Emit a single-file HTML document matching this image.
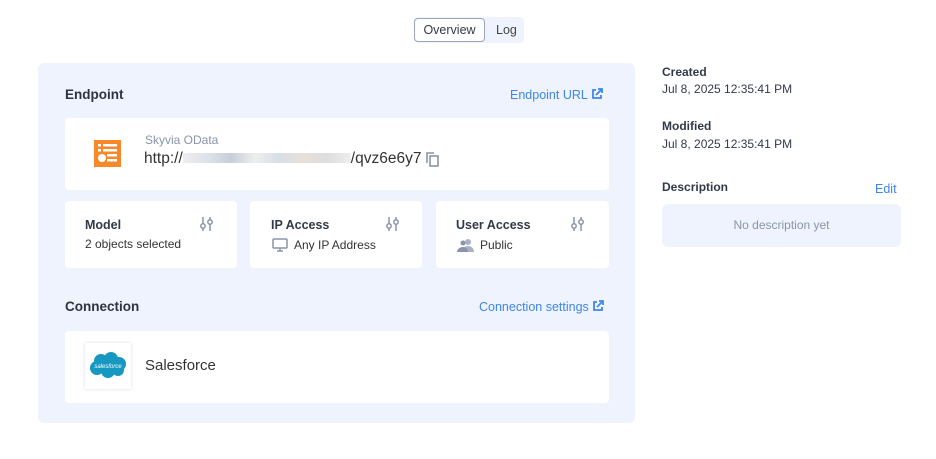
<!DOCTYPE html>
<html><head><style>
*{box-sizing:border-box;margin:0;padding:0}
body{width:936px;height:459px;background:#fff;font-family:"Liberation Sans",sans-serif;color:#333a47;position:relative;overflow:hidden}
.a{position:absolute}
.tabs{left:414px;top:17px;width:110px;height:26px;background:#eef3fd;border-radius:4px}
.tab1{left:414px;top:18px;width:71px;height:24px;border:1px solid #9aa6c4;border-radius:4px;background:#fff;font-size:12.5px;text-align:center;line-height:22px}
.tab2{left:496px;top:18px;font-size:12.5px;line-height:24px;color:#444}
.panel{left:38px;top:63px;width:597px;height:360px;background:#eef3fd;border-radius:6px}
.card{background:#fff;border-radius:4px}
.h{font-size:13.5px;font-weight:bold;color:#2d3440}
.lnk{color:#3d87e8;font-size:12.5px}
.b{font-size:12.5px;font-weight:bold}
.t{font-size:12px}
.g{font-size:12px;color:#333}
</style></head><body>
<div class="a tabs"></div>
<div class="a tab1">Overview</div>
<div class="a tab2">Log</div>
<div class="a panel"></div>
<div class="a h" style="left:65px;top:87px">Endpoint</div>
<div class="a lnk" style="left:510px;top:88px">Endpoint URL <svg width="12" height="12" viewBox="0 0 12 12" style="vertical-align:-1px"><path d="M5 2H2v8h8V7" fill="none" stroke="#3d87e8" stroke-width="1.8"/><path d="M7 1h4v4M11 1L5 7" fill="none" stroke="#3d87e8" stroke-width="1.8"/></svg></div>
<div class="a card" style="left:65px;top:118px;width:544px;height:72px"></div>
<svg class="a" style="left:94px;top:140px" width="27" height="27" viewBox="0 0 27 27"><rect width="27" height="27" fill="#f7892a"/><g fill="#fff"><rect x="4" y="4" width="3" height="2.5"/><rect x="9" y="4" width="14" height="2.5"/><rect x="4" y="9" width="3" height="2.5"/><rect x="9" y="9" width="14" height="2.5"/><rect x="13" y="14" width="10" height="2.5"/><rect x="13" y="19" width="10" height="2.5"/><circle cx="8" cy="18" r="4"/></g></svg>
<div class="a" style="left:145px;top:133px;font-size:12px;color:#8a94ab">Skyvia OData</div>
<div class="a" style="left:144px;top:150px;font-size:15.5px;color:#333">http://<span style="display:inline-block;width:168px;height:10px;background:linear-gradient(90deg,#eee,#dde3ea,#c8ced8,#eee,#d8dee6,#e8e0d8,#ddd,#eee)"></span>/qvz6e6y7</div>
<svg class="a" style="left:426px;top:152px" width="13" height="15" viewBox="0 0 13 15"><rect x="4" y="4" width="8" height="10" fill="none" stroke="#8a94ab" stroke-width="1.6"/><path d="M1 11V1h7" fill="none" stroke="#8a94ab" stroke-width="1.6"/></svg>

<div class="a card" style="left:65px;top:201px;width:172px;height:67px"></div>
<div class="a card" style="left:250px;top:201px;width:172px;height:67px"></div>
<div class="a card" style="left:436px;top:201px;width:173px;height:67px"></div>
<div class="a b" style="left:85px;top:218px">Model</div>
<div class="a g" style="left:85px;top:237px">2 objects selected</div>
<div class="a b" style="left:271px;top:218px">IP Access</div>
<svg class="a" style="left:272px;top:238px" width="16" height="14" viewBox="0 0 16 14"><rect x="1" y="1" width="14" height="9" rx="1" fill="none" stroke="#8a94ab" stroke-width="1.5"/><path d="M8 10v3M5 13h6" stroke="#8a94ab" stroke-width="1.5"/></svg>
<div class="a g" style="left:294px;top:238px">Any IP Address</div>
<div class="a b" style="left:456px;top:218px">User Access</div>
<svg class="a" style="left:457px;top:238px" width="17" height="14" viewBox="0 0 17 14"><circle cx="11" cy="4" r="3" fill="#aab3c6"/><path d="M5 14c0-4 3-6 6-6s6 2 6 6z" fill="#aab3c6"/><circle cx="6" cy="5" r="2.5" fill="#8a94ab"/><path d="M0 14c0-3 3-5 6-5s5 2 5 5z" fill="#8a94ab"/></svg>
<div class="a g" style="left:480px;top:238px">Public</div>
<svg class="a" style="left:199px;top:216px" width="15" height="16" viewBox="0 0 15 16"><g fill="none" stroke="#8a94ab" stroke-width="1.5"><path d="M4 1v14M11 1v14"/><circle cx="4" cy="10" r="2.2" fill="#fff"/><circle cx="11" cy="6" r="2.2" fill="#fff"/></g></svg>
<svg class="a" style="left:385px;top:216px" width="15" height="16" viewBox="0 0 15 16"><g fill="none" stroke="#8a94ab" stroke-width="1.5"><path d="M4 1v14M11 1v14"/><circle cx="4" cy="10" r="2.2" fill="#fff"/><circle cx="11" cy="6" r="2.2" fill="#fff"/></g></svg>
<svg class="a" style="left:570px;top:216px" width="15" height="16" viewBox="0 0 15 16"><g fill="none" stroke="#8a94ab" stroke-width="1.5"><path d="M4 1v14M11 1v14"/><circle cx="4" cy="10" r="2.2" fill="#fff"/><circle cx="11" cy="6" r="2.2" fill="#fff"/></g></svg>

<div class="a h" style="left:65px;top:299px">Connection</div>
<div class="a lnk" style="left:479px;top:300px">Connection settings <svg width="12" height="12" viewBox="0 0 12 12" style="vertical-align:-1px"><path d="M5 2H2v8h8V7" fill="none" stroke="#3d87e8" stroke-width="1.8"/><path d="M7 1h4v4M11 1L5 7" fill="none" stroke="#3d87e8" stroke-width="1.8"/></svg></div>
<div class="a card" style="left:65px;top:331px;width:544px;height:72px"></div>
<div class="a" style="left:85px;top:343px;width:46px;height:46px;background:#fff;box-shadow:0 0 3px rgba(0,0,0,.15)"></div>
<svg class="a" style="left:89px;top:352px" width="38" height="27" viewBox="0 0 38 27"><g fill="#1798c1"><circle cx="12" cy="9" r="7"/><circle cx="22" cy="7" r="7"/><circle cx="30" cy="12" r="7"/><circle cx="8" cy="16" r="7"/><circle cx="19" cy="19" r="7"/><circle cx="29" cy="18" r="6"/></g><text x="19" y="16" font-size="6" fill="#fff" text-anchor="middle" font-family="Liberation Sans" font-style="italic">salesforce</text></svg>
<div class="a" style="left:145px;top:357px;font-size:15px;color:#333">Salesforce</div>

<div class="a b" style="left:662px;top:65px;font-size:12px">Created</div>
<div class="a t" style="left:662px;top:82px">Jul 8, 2025 12:35:41 PM</div>
<div class="a b" style="left:662px;top:119px;font-size:12px">Modified</div>
<div class="a t" style="left:662px;top:137px">Jul 8, 2025 12:35:41 PM</div>
<div class="a b" style="left:662px;top:180px;font-size:12px">Description</div>
<div class="a lnk" style="left:875px;top:182px;font-size:12.5px">Edit</div>
<div class="a" style="left:662px;top:204px;width:239px;height:43px;background:#eef3fd;border-radius:6px;text-align:center;line-height:43px;font-size:12px;color:#8a94ab">No description yet</div>
</body></html>
